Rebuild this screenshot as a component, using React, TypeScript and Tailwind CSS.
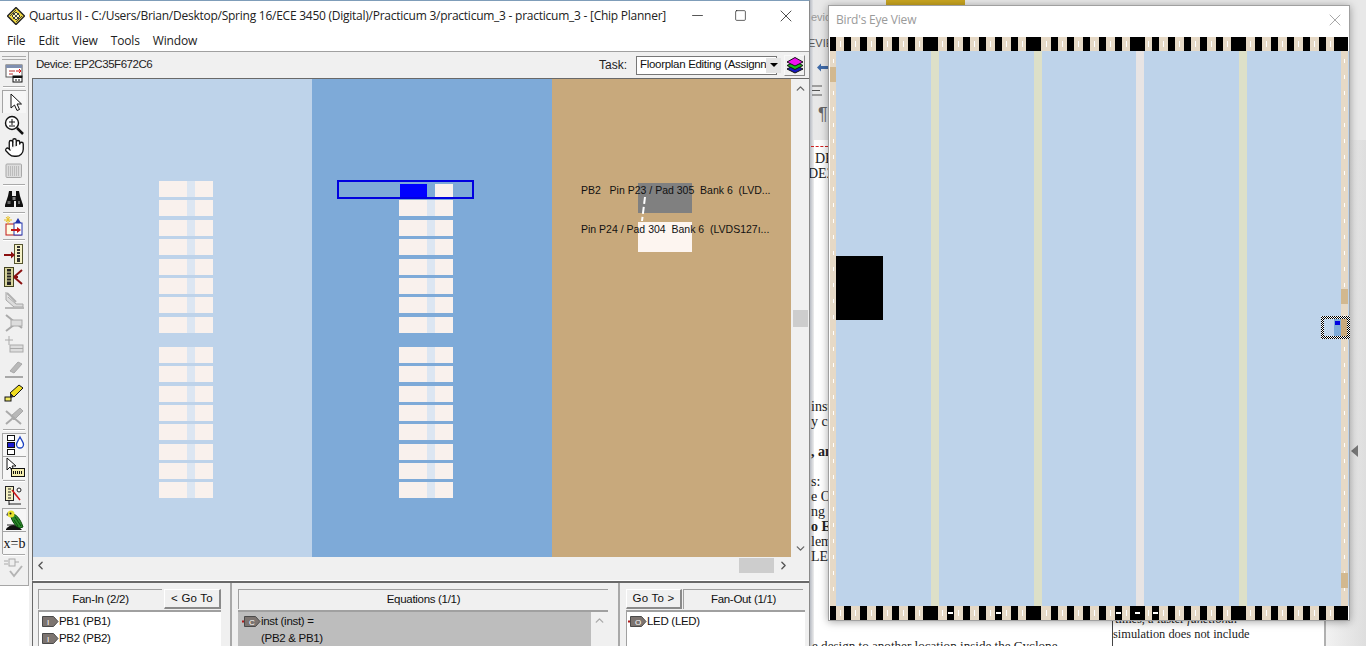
import React from 'react';
import { Hand, X, Minus, Square, ChevronUp, ChevronDown, ChevronLeft, ChevronRight } from 'lucide-react';

const UI = "font-['Liberation_Sans',sans-serif]";
const SEGOE = "font-['Open_Sans',sans-serif]";
const SERIF = "font-['Liberation_Serif',serif]";

/* ---------- toolbar icons ---------- */
const Svg: React.FC<{ children: React.ReactNode }> = ({ children }) => (
  <svg width="22" height="22" viewBox="0 0 22 22">{children}</svg>
);

const IconWindow = () => (
  <Svg>
    <rect x="3" y="3" width="16" height="12" fill="#fff" stroke="#555" />
    <rect x="3" y="3" width="16" height="3" fill="#7f8fb0" />
    <path d="M6 9h6M6 12h4" stroke="#b33" />
    <path d="M13 9l5 0l-2-2M18 9l-2 2" stroke="#d11" fill="none" />
    <rect x="10" y="14" width="9" height="6" fill="#fff" stroke="#111" />
    <rect x="10" y="14" width="9" height="2" fill="#111" />
    <path d="M13 17v2M16 17v2" stroke="#111" />
  </Svg>
);
const IconArrow = () => (
  <Svg>
    <path d="M7 3v14l3.5-3 2.500 5.500 2.500-1-2.500-5.500h4.500z" fill="#fff" stroke="#111" strokeLinejoin="round" />
  </Svg>
);
const IconZoom = () => (
  <Svg>
    <circle cx="9" cy="9" r="6.500" fill="#fff" stroke="#111" strokeWidth="1.400" />
    <path d="M6 8h6M9 5v6M6 12h6" stroke="#111" />
    <path d="M14 14l6 6" stroke="#111" strokeWidth="2.500" />
  </Svg>
);
const IconGrid = () => (
  <svg width="18" height="16" viewBox="0 0 18 16">
    <rect x="1" y="1" width="15.500" height="13.500" fill="#dcdcdc" stroke="#a8a8a8" rx="1" />
    <path d="M3 4h12M3 6h12M3 8h12M3 10h12M3 12h12" stroke="#9c9c9c" strokeDasharray="1 1" />
  </svg>
);
const IconBinoculars = () => (
  <Svg>
    <path d="M6 3h3v5h4V3h3l1 5 3 9v2h-7v-6h-2v6H2v-2l3-9z" fill="#111" />
    <path d="M4.500 13h3v3h-3zM15 13h2v3h-2z" fill="#666" />
    <path d="M9.500 9h3v3h-3z" fill="#888" />
  </Svg>
);
const IconPinAssign = () => (
  <Svg>
    <rect x="3" y="8" width="15" height="11" fill="#fffbe0" stroke="#c01818" />
    <path d="M3 1l4 5M7 1L3 6M1 4h8M5 0v8" stroke="#e8c020" />
    <rect x="11" y="7" width="8" height="12" fill="#fff" stroke="#2233aa" />
    <path d="M15 2l-3 5h6z" fill="#2233aa" />
    <path d="M8 14h9" stroke="#c01818" strokeWidth="2" />
    <path d="M14 11l4 3-4 3z" fill="#c01818" />
  </Svg>
);
const IconPinIn = () => (
  <Svg>
    <rect x="11.500" y="1.500" width="8" height="19" fill="#f6f2c8" stroke="#555530" />
    <rect x="14" y="3" width="3" height="16" fill="#333" />
    <path d="M14 5.500h3M14 8.500h3M14 11.500h3M14 14.500h3" stroke="#f6f2c8" />
    <path d="M1 12h9" stroke="#8a1010" strokeWidth="2" />
    <path d="M8 8.500l4 3.500-4 3.500z" fill="#8a1010" />
  </Svg>
);
const IconPinFan = () => (
  <Svg>
    <rect x="1.500" y="1.500" width="9" height="19" fill="#d8d49c" stroke="#444420" />
    <rect x="4" y="3" width="4" height="16" fill="#222" />
    <path d="M4 6h4M4 9h4M4 12h4M4 15h4" stroke="#d8d49c" />
    <path d="M11 11l8-7M11 11l8 7M11 11h4" stroke="#8a1010" strokeWidth="2" fill="none" />
  </Svg>
);
const IconGrayA = () => (
  <Svg>
    <path d="M3 3v8l8 7h9v-3h-7L5 8" fill="#dcdcdc" stroke="#a8a8a8" />
    <path d="M4 4l9 9" stroke="#b0b0b0" strokeWidth="2" />
    <path d="M2 19h19" stroke="#b8b8b8" strokeWidth="2" />
  </Svg>
);
const IconGrayB = () => (
  <Svg>
    <path d="M3 3l16 13M3 19l13-10" stroke="#aaa" strokeWidth="2" />
    <rect x="8" y="8" width="11" height="6" fill="#ddd" stroke="#aaa" />
  </Svg>
);
const IconGrayC = () => (
  <Svg>
    <path d="M6 1v9M2 5h8" stroke="#aaa" />
    <rect x="7" y="10" width="13" height="7" fill="#ddd" stroke="#aaa" />
    <path d="M7 13.500h13" stroke="#aaa" />
  </Svg>
);
const IconGrayPen = () => (
  <Svg>
    <path d="M7 13l8-9 4 2-8 9z" fill="#b8b8b8" stroke="#a8a8a8" />
    <path d="M2 19h18" stroke="#a8a8a8" strokeWidth="2" />
  </Svg>
);
const IconYellowPen = () => (
  <Svg>
    <path d="M7 12l9-8 4 3-9 9z" fill="#f0dc20" stroke="#111" />
    <path d="M7 12l4 4-4 1z" fill="#333" />
    <rect x="2" y="16" width="6" height="4" fill="#f0e860" stroke="#111" />
  </Svg>
);
const IconGrayCross = () => (
  <Svg>
    <path d="M8 12l9-8 3 3-9 9z" fill="#b8b8b8" stroke="#a8a8a8" />
    <path d="M3 7l15 13M3 20l7-6" stroke="#aaa" strokeWidth="2" />
  </Svg>
);
const IconBlueBlocks = () => (
  <Svg>
    <rect x="3.500" y="1.500" width="7" height="5" fill="#fff" stroke="#111" />
    <rect x="3.500" y="8.500" width="7" height="5" fill="#1a1ad0" stroke="#111" />
    <rect x="3.500" y="15.500" width="7" height="5" fill="#fff" stroke="#111" />
    <path d="M16 3c-2 4-3.500 5.500-3.500 7.500a3.500 3.500 0 0 0 7 0C19.500 8.500 18 7 16 3z" fill="#fff" stroke="#1a40c0" strokeWidth="1.300" />
  </Svg>
);
const IconCursorChip = () => (
  <Svg>
    <path d="M3 1v12l3-3 2 4 2-1-2-4h4z" fill="#fff" stroke="#111" />
    <rect x="7.500" y="11.500" width="13" height="8" fill="#f5eeb0" stroke="#111" />
    <path d="M9.500 14v3M11.500 14v3M13.500 14v3M15.500 14v3M17.500 14v3" stroke="#111" />
  </Svg>
);
const IconWave = () => (
  <Svg>
    <rect x="2.500" y="2.500" width="8" height="14" fill="#f4f0c0" stroke="#222" />
    <path d="M5 5h3M5 8h3M5 11h3M5 14h3" stroke="#222" />
    <path d="M9 6l8 10" stroke="#d01818" strokeWidth="1.500" />
    <circle cx="16" cy="6" r="2" fill="#fff" stroke="#222" />
    <path d="M6 17v4M6 20h12" stroke="#222" />
  </Svg>
);
const IconParrot = () => (
  <Svg>
    <path d="M2 20c4-5 9-5 13-2l3 3H2z" fill="#111" />
    <path d="M8 5c4 0 8 4 11 13l-3 1-4-2c-2-3-4-5-5-9z" fill="#2a8a2a" stroke="#0c4a0c" />
    <path d="M11 8l6 9M10 11l4 6" stroke="#0c4a0c" />
    <circle cx="7" cy="5" r="3.500" fill="#e6e030" />
    <circle cx="6.500" cy="4.500" r="1" fill="#111" />
    <path d="M4 3L2 6l2 1z" fill="#666" />
    <path d="M3 16h8" stroke="#222" />
  </Svg>
);
const IconGrayCheck = () => (
  <Svg>
    <rect x="6" y="2" width="6" height="7" fill="#eee" stroke="#aaa" />
    <path d="M1 4h4M1 7h4M12 5h4" stroke="#aaa" />
    <path d="M7 14l4 5 8-10" stroke="#b4b4b4" strokeWidth="2" fill="none" />
  </Svg>
);
const IconLayers = () => (
  <svg width="18" height="18" viewBox="0 0 18 18">
    <path d="M1 13l8-4 8 4-8 4z" fill="#1616c0" stroke="#111" />
    <path d="M1 9.500l8-4 8 4-8 4z" fill="#18c018" stroke="#111" />
    <path d="M1 6l8-4.500L17 6l-8 4z" fill="#f010f0" stroke="#111" />
  </svg>
);

const Sep = ({ h }: { h: string }) => (
  <div className={`flex w-full shrink-0 items-center px-[3px] ${h}`}>
    <div className="h-[2px] w-full border-t border-[#a9a9a9] bg-white" />
  </div>
);

const Btn: React.FC<{ pressed?: boolean; children: React.ReactNode }> = ({ pressed, children }) => (
  <div
    className={`flex h-[23px] w-[24px] shrink-0 items-center justify-center ${
      pressed ? 'border-t border-l border-[#a4a4a4] bg-[#f6f6f6]' : ''
    }`}
  >
    {children}
  </div>
);

const Toolbar = () => (
  <div className="flex h-[534px] w-[29px] shrink-0 flex-col items-center border-r border-b border-[#a6a6a6] bg-[#f0f0f0]">
    <div className="mt-[4px] h-[4px] w-[24px] shrink-0 border-y border-[#a9a9a9]" />
    <div className="mt-[1px]"><Btn><IconWindow /></Btn></div>
    <Sep h="h-[6px]" />
    <Btn pressed><IconArrow /></Btn>
    <Btn><IconZoom /></Btn>
    <Btn><Hand size={21} strokeWidth={1.500} fill="#fff" color="#111" /></Btn>
    <Btn><IconGrid /></Btn>
    <Sep h="h-[5px]" />
    <Btn><IconBinoculars /></Btn>
    <Sep h="h-[5px]" />
    <Btn><IconPinAssign /></Btn>
    <Sep h="h-[4px]" />
    <Btn><IconPinIn /></Btn>
    <Btn><IconPinFan /></Btn>
    <Btn><IconGrayA /></Btn>
    <Btn><IconGrayB /></Btn>
    <Btn><IconGrayC /></Btn>
    <Btn><IconGrayPen /></Btn>
    <Btn><IconYellowPen /></Btn>
    <Btn><IconGrayCross /></Btn>
    <Sep h="h-[7px]" />
    <Btn pressed><IconBlueBlocks /></Btn>
    <Btn pressed><IconCursorChip /></Btn>
    <Sep h="h-[4px]" />
    <Btn><IconWave /></Btn>
    <div className="h-[2px] shrink-0" />
    <Btn pressed><IconParrot /></Btn>
    <Btn pressed><span className={`${SERIF} text-[14px] text-[#111]`}>x=b</span></Btn>
    <Sep h="h-[2px]" />
    <Btn><IconGrayCheck /></Btn>
  </div>
);

/* ---------- chip planner canvas ---------- */
const Cell = ({ mid, first }: { mid: string; first?: boolean }) => (
  <div className={`flex h-[16px] w-[54px] shrink-0 ${first ? 'mt-[0px]' : 'mt-[3.400px]'}`}>
    <div className="w-[28px] bg-[#f9f1ed]" />
    <div className={`w-[8px] ${mid}`} />
    <div className="w-[18px] bg-[#f9f1ed]" />
  </div>
);

const Cells = ({ mid }: { mid: string }) => (
  <>
    {[0, 1, 2, 3, 4, 5, 6, 7].map(i => <Cell key={i} mid={mid} first={i === 0} />)}
    <div className="h-[14px] shrink-0" />
    {[0, 1, 2, 3, 4, 5, 6, 7].map(i => <Cell key={i} mid={mid} first={i === 0} />)}
  </>
);

const Canvas = () => (
  <div className="flex h-[478px] flex-1">
    <div className="w-[279px] bg-[#bed3ea] pt-[102px] pl-[126px]">
      <Cells mid="bg-[#dce6f2]" />
    </div>
    <div className="relative w-[240px] bg-[#7eaad8] pt-[102px] pl-[87px]">
      <Cells mid="bg-[#dce6f2]" />
      <div className="absolute top-[101px] left-[25px] flex h-[19px] w-[137px] border-2 border-[#0000e0] bg-[#7eaad8] pt-[2px] pl-[61px]">
        <div className="h-[13px] w-[27px] bg-[#0000ff]" />
        <div className="ml-[8px] h-[13px] w-[18px] bg-[#f9f1ed]" />
      </div>
    </div>
    <div className="relative flex-1 bg-[#c8a97c] pt-[104px] pl-[86px]">
      <div className="h-[30px] w-[54px] bg-[#808080]" />
      <div className="mt-[9px] h-[30px] w-[54px] bg-[#fdf5f0]" />
      <svg className="absolute top-[117px] left-[88px]" width="8" height="26" viewBox="0 0 8 26">
        <path d="M5 1L2 25" stroke="#fff" strokeWidth="2" strokeDasharray="7 3" />
      </svg>
      <div className={`${UI} absolute top-[105px] left-[29px] text-[10.500px] leading-[12px] whitespace-pre text-[#111]`}>PB2   Pin P23 / Pad 305  Bank 6  (LVD...</div>
      <div className={`${UI} absolute top-[144px] left-[29px] text-[10.500px] leading-[12px] whitespace-pre text-[#111]`}>Pin P24 / Pad 304  Bank 6  (LVDS127ı...</div>
    </div>
  </div>
);

const PortIcon = ({ letter, tail }: { letter: string; tail?: boolean }) => (
  <svg width="19" height="13" viewBox="0 0 19 13" className="shrink-0">
    {tail && <rect x="0" y="5.500" width="4" height="2" fill="#b01818" />}
    <path d="M2.500 1.500h11l4.500 5-4.500 5h-11z" fill="#7c7470" stroke="#4a4a4a" />
    <text x="7" y="9.500" fontSize="8" fill="#fff" fontFamily="Liberation Sans">{letter}</text>
  </svg>
);

const PanelHead: React.FC<{ w: string; children: React.ReactNode }> = ({ w, children }) => (
  <div className={`flex h-[20px] items-center justify-center border-t border-l border-[#a0a0a0] bg-[#f0f0f0] text-[11.500px] tracking-[-0.300px] text-[#111] ${w}`}>{children}</div>
);

const GoTo: React.FC<{ children: React.ReactNode }> = ({ children }) => (
  <div className="ml-[2px] flex h-[20px] w-[57px] items-center justify-center border border-r-2 border-b-2 border-[#8a8a8a] border-t-white border-l-white bg-[#f0f0f0] text-[11.500px] tracking-[0.200px] text-[#111]">{children}</div>
);

/* ---------- bird's eye ---------- */
const starts: [number, number][] = (() => {
  const out: [number, number][] = [[0, 6]];
  const wide = [93, 196, 300, 401];
  wide.forEach(w => {
    for (let x = w - 79; x < w; x += 16) {
      if (x > 6) out.push([x, 7]);
    }
    out.push([w, 15]);
  });
  for (let x = 425; x < 500; x += 16) out.push([x, 7]);
  out.push([504, 14]);
  return out;
})();

const MARKED = [117, 165, 285, 300, 322];

const PinStrip = ({ bottom }: { bottom?: boolean }) => {
  let cursor = 0;
  return (
    <div className="flex h-[14px] w-[518px] shrink-0 bg-[#e6d9c6]">
      {starts.map(([x, w], i) => {
        const gap = Math.max(0, x - cursor);
        cursor = x + w;
        return (
          <React.Fragment key={i}>
            <div className="flex items-center justify-center" style={{ width: gap }}>
              {gap > 0 && <div className="h-[6px] w-[1px] bg-white" />}
            </div>
            <div className="flex items-center justify-center bg-black" style={{ width: w }}>
              {bottom && MARKED.includes(x) && <div className="h-[2px] w-[5px] bg-white" />}
            </div>
          </React.Fragment>
        );
      })}
    </div>
  );
};

const EdgeStrip = ({ w, blocks }: { w: string; blocks: number[] }) => (
  <div className={`relative h-full shrink-0 bg-[#e6d9c6] ${w}`}>
    {Array.from({ length: 34 }, (_, i) => (
      <div key={i} className="mx-auto mb-[12px] h-[4px] w-[1px] bg-white first:mt-[8px]" />
    ))}
    {blocks.map(y => (
      <div key={y} className="absolute left-0 h-[15px] w-full bg-[#d2b88f]" style={{ top: y }} />
    ))}
  </div>
);

const BirdsEye = () => (
  <div className="absolute top-[5px] left-[828px] flex h-[616px] w-[522px] flex-col border border-[#a0a0a0] bg-white shadow-[0_1px_8px_rgba(0,0,0,0.35)]">
    <div className="flex h-[31px] shrink-0 items-center justify-between pr-[4px] pb-[4px] pl-[7px]">
      <span className={`${SEGOE} text-[12px] tracking-[-0.200px] text-[#9a9a9a]`}>Bird's Eye View</span>
      <X size={20} strokeWidth={0.900} color="#8a8a8a" />
    </div>
    <div className="relative ml-[1px] flex flex-1 flex-col">
      <PinStrip />
      <div className="flex min-h-0 flex-1 bg-[#bed3ea]">
        <EdgeStrip w="w-[6px]" blocks={[16]} />
        <div className="relative w-[95px] shrink-0">
          <div className="absolute top-[205px] left-0 h-[64px] w-[47px] bg-black" />
        </div>
        <div className="w-[8px] shrink-0 bg-[#dde0c8]" />
        <div className="w-[95px] shrink-0" />
        <div className="w-[8px] shrink-0 bg-[#dde0c8]" />
        <div className="w-[94px] shrink-0" />
        <div className="w-[8px] shrink-0 bg-[#e8e4e4]" />
        <div className="w-[95px] shrink-0" />
        <div className="w-[8px] shrink-0 bg-[#dde0c8]" />
        <div className="w-[94px] shrink-0" />
        <EdgeStrip w="w-[7px]" blocks={[238, 522]} />
      </div>
      <PinStrip bottom />
    </div>
    <div className="absolute top-[310px] left-[492px] h-[23px] w-[29px] bg-[repeating-conic-gradient(#000_0_25%,#fff_0_50%)] bg-[length:2px_2px] p-[3px]">
      <div className="relative flex h-full bg-[#bed3ea]">
        <div className="w-[10px]" />
        <div className="w-[7px] bg-[#7eaad8]" />
        <div className="flex-1 bg-[#c8a97c]" />
        <div className="absolute top-[2px] left-[11px] h-[4px] w-[5px] bg-[#0000e0]" />
      </div>
    </div>
  </div>
);

/* ---------- the word document behind ---------- */
const Scrap: React.FC<{ y: string; x?: string; bold?: boolean; children: React.ReactNode }> = ({ y, x = 'left-[811px]', bold, children }) => (
  <div className={`${SERIF} absolute text-[14px] leading-[15px] whitespace-pre text-[#222] ${x} ${y} ${bold ? 'font-bold' : ''}`}>{children}</div>
);

const Backdrop = () => (
  <div className="absolute inset-0 bg-white">
    <div className="absolute top-0 left-[810px] h-[140px] w-[556px] bg-[#e8e8e8]" />
    <div className="absolute top-0 left-[886px] h-[5px] w-[79px] bg-[#c9a520]" />
    <div className="absolute top-0 left-[810px] h-[646px] w-[4px] bg-gradient-to-r from-[#b8bcc4] to-[#eeeeee]" />
    <div className={`${UI} absolute top-[9px] left-[811px] text-[11px] text-[#999]`}>evic</div>
    <div className={`${UI} absolute top-[35px] left-[808px] text-[11px] text-[#555]`}>EVIE</div>
    <svg className="absolute top-[61px] left-[816px]" width="12" height="13" viewBox="0 0 12 13">
      <path d="M1 6.500l4-4v2.500h7v3H5v2.500z" fill="#3e6aa8" />
    </svg>
    <svg className="absolute top-[85px] left-[812px]" width="10" height="11" viewBox="0 0 10 11">
      <path d="M0 1h10M0 5.500h8M0 10h10" stroke="#555" />
    </svg>
    <div className={`${UI} absolute top-[104px] left-[818px] text-[18px] leading-[20px] text-[#666]`}>¶</div>
    <div className="absolute top-[146px] left-[811px] h-[1px] w-[17px] border-t border-dashed border-[#d02020]" />
    <Scrap y="top-[151px]" x="left-[815px]">DE</Scrap>
    <Scrap y="top-[166px]" x="left-[808px]">DE2</Scrap>
    <Scrap y="top-[399px]">inst</Scrap>
    <Scrap y="top-[414px]">y co</Scrap>
    <Scrap y="top-[444px]" bold>, an</Scrap>
    <Scrap y="top-[474px]">s:</Scrap>
    <Scrap y="top-[489px]">e O</Scrap>
    <Scrap y="top-[504px]">ng</Scrap>
    <Scrap y="top-[519px]" bold>o E</Scrap>
    <Scrap y="top-[534px]">lem</Scrap>
    <Scrap y="top-[549px]">LE</Scrap>
    <div className={`${SERIF} absolute top-[638px] left-[812px] text-[13.100px] leading-[15px] whitespace-pre text-[#222]`}>e design to another location inside the Cyclone</div>
    <div className="absolute top-[621px] left-[1112px] h-[25px] w-[1px] bg-[#444]" />
    <div className={`${SERIF} absolute top-[612px] left-[1115px] text-[12.400px] leading-[15px] whitespace-pre text-[#222]`}>times, a faster <i>functional</i></div>
    <div className={`${SERIF} absolute top-[627px] left-[1113px] text-[12.400px] leading-[15px] whitespace-pre text-[#222]`}>simulation does not include</div>
    <div className="absolute top-[560px] left-[1324px] h-[86px] w-[2px] bg-[#b0b0b0]" />
    <div className="absolute top-[140px] left-[1326px] h-[506px] w-[40px] bg-gradient-to-r from-[#f2f2f2] to-[#dedede]" />
    <div className="absolute top-[445px] left-[1351px] h-0 w-0 border-y-[6px] border-r-[7px] border-y-transparent border-r-[#777]" />
  </div>
);

const MainWindow = () => (
  <div className={`${UI} absolute top-0 left-0 flex h-[646px] w-[810px] flex-col overflow-hidden border-t border-r border-t-[#7f9db9] border-r-[#8a8a8a] bg-white`}>
    <div className="flex h-[29px] shrink-0 items-center">
      <svg width="18" height="18" viewBox="0 0 18 18" className="ml-[7px]">
        <path d="M9 .5l8.500 8.500-8.500 8.500L.5 9z" fill="#f0d840" stroke="#222" strokeWidth="1.400" />
        <path d="M5 9l4-4 4 4-4 4z" fill="#fff8c0" stroke="#333" />
        <path d="M6 6l6 6M12 6l-6 6M3 9l6-6M9 15l6-6" stroke="#444" />
      </svg>
      <span className={`${SEGOE} ml-[4px] text-[12px] tracking-[-0.250px] whitespace-pre text-[#222]`}>Quartus II - C:/Users/Brian/Desktop/Spring 16/ECE 3450 (Digital)/Practicum 3/practicum_3 - practicum_3 - [Chip Planner]</span>
      <div className="ml-auto flex items-center">
        <Minus size={17} strokeWidth={1} color="#111" />
        <div className="ml-[28px]"><Square size={13} strokeWidth={1.200} color="#111" /></div>
        <div className="mr-[13px] ml-[29px]"><X size={20} strokeWidth={0.900} color="#111" /></div>
      </div>
    </div>
    <div className={`${SEGOE} flex h-[21px] shrink-0 items-center gap-[13px] pl-[7px] text-[12px] tracking-[-0.150px] text-[#222]`}>
      <span>File</span>
      <span>Edit</span>
      <span>View</span>
      <span>Tools</span>
      <span>Window</span>
    </div>
    <div className="flex min-h-0 flex-1 border-t border-[#a0a0a0]">
      <div className="flex shrink-0 flex-col">
        <Toolbar />
      </div>
      <div className="flex min-w-0 flex-1 flex-col bg-[#f0f0f0] pl-[3px]">
        <div className="flex h-[26px] shrink-0 items-center bg-[#f0f0f0] pl-[4px] text-[12px] text-[#222]">
          <span className="text-[11.500px] tracking-[-0.450px]">Device: EP2C35F672C6</span>
          <span className="ml-auto">Task:</span>
          <div className="ml-[9px] flex h-[19px] w-[141px] items-center justify-between border border-[#777] bg-white pr-[1px] pl-[3px] text-[11.500px] tracking-[-0.300px] whitespace-nowrap text-[#111]">
            <span>Floorplan Editing (Assignn</span>
            <div className="flex h-[15px] w-[15px] shrink-0 items-center justify-center bg-[#e4e4e4]">
              <div className="h-0 w-0 border-x-[4px] border-t-[4px] border-x-transparent border-t-black" />
            </div>
          </div>
          <div className="mr-[4px] ml-[7px] flex h-[21px] w-[21px] items-center justify-center border border-[#f8f8f8] border-r-[#888] border-b-[#888]">
            <IconLayers />
          </div>
        </div>
        <div className="flex h-[479px] shrink-0 border-t border-l border-[#696969]">
          <Canvas />
          <div className="flex w-[18px] shrink-0 flex-col items-center bg-[#f0f0f0] pt-[3px]">
            <ChevronUp size={13} strokeWidth={2.500} color="#666" />
            <div className="mt-[215px] h-[17px] w-[15px] bg-[#cdcdcd]" />
            <div className="mt-auto mb-[2px]"><ChevronDown size={13} strokeWidth={2.500} color="#666" /></div>
          </div>
        </div>
        <div className="flex h-[17px] shrink-0 items-center border-l border-[#696969] bg-[#f0f0f0] pl-[1px]">
          <ChevronLeft size={13} strokeWidth={2.500} color="#555" />
          <div className="ml-auto h-[15px] w-[35px] bg-[#cdcdcd]" />
          <div className="mr-[19px] ml-[3px]"><ChevronRight size={13} strokeWidth={2.500} color="#555" /></div>
        </div>
        <div className="h-[7px] shrink-0 border-b border-l border-b-white border-l-[#696969]" />
        <div className="flex min-h-0 flex-1 border-t-2 border-l border-[#696969] text-[#111]">
          <div className="flex w-[199px] shrink-0 flex-col border-r-2 border-[#a8a8a8] pt-[6px] pl-[5px]">
            <div className="flex">
              <PanelHead w="w-[124px]">Fan-In (2/2)</PanelHead>
              <GoTo>&lt; Go To</GoTo>
            </div>
            <div className="mt-[1px] mr-[9px] flex-1 border-t-2 border-l border-[#a0a0a0] bg-white pt-[1px] pl-[1px] text-[11.500px] leading-[17px] tracking-[-0.300px]">
              <div className="flex items-center"><PortIcon letter="I" /><span>PB1 (PB1)</span></div>
              <div className="flex items-center"><PortIcon letter="I" /><span>PB2 (PB2)</span></div>
            </div>
          </div>
          <div className="flex w-[388px] shrink-0 flex-col border-r-2 border-[#a8a8a8] pt-[6px] pl-[6px]">
            <div className="w-[370px]"><PanelHead w="w-full">Equations (1/1)</PanelHead></div>
            <div className="mt-[1px] flex w-[370px] flex-1 border-t-2 border-[#a0a0a0]">
              <div className="flex-1 bg-[#bdbdbd] pt-[1px] pl-[4px] text-[11.500px] leading-[17px] tracking-[-0.300px]">
                <div className="flex items-center"><PortIcon letter="C" tail /><span>inst (inst) =</span></div>
                <div className="pl-[19px]">(PB2 &amp; PB1)</div>
              </div>
              <div className="flex w-[17px] justify-center bg-[#f0f0f0] pt-[2px]"><ChevronUp size={13} strokeWidth={2.500} color="#aaa" /></div>
            </div>
          </div>
          <div className="flex flex-1 flex-col pt-[6px] pl-[6px]">
            <div className="flex">
              <div className="flex h-[20px] w-[56px] items-center justify-center border border-r-2 border-b-2 border-[#8a8a8a] border-t-white border-l-white bg-[#f0f0f0] text-[11.500px] tracking-[0.200px] text-[#111]">Go To &gt;</div>
              <div className="ml-[1px]"><PanelHead w="w-[120px]">Fan-Out (1/1)</PanelHead></div>
            </div>
            <div className="mt-[1px] mr-[4px] flex-1 border-t-2 border-l border-[#a0a0a0] bg-white pt-[1px] pl-[1px] text-[11.500px] leading-[17px] tracking-[-0.300px]">
              <div className="flex items-center"><PortIcon letter="O" tail /><span>LED (LED)</span></div>
            </div>
          </div>
        </div>
      </div>
    </div>
  </div>
);

export default function App() {
  return (
    <div className="relative h-[646px] w-[1366px] overflow-hidden bg-white">
      <Backdrop />
      <MainWindow />
      <BirdsEye />
    </div>
  );
}
